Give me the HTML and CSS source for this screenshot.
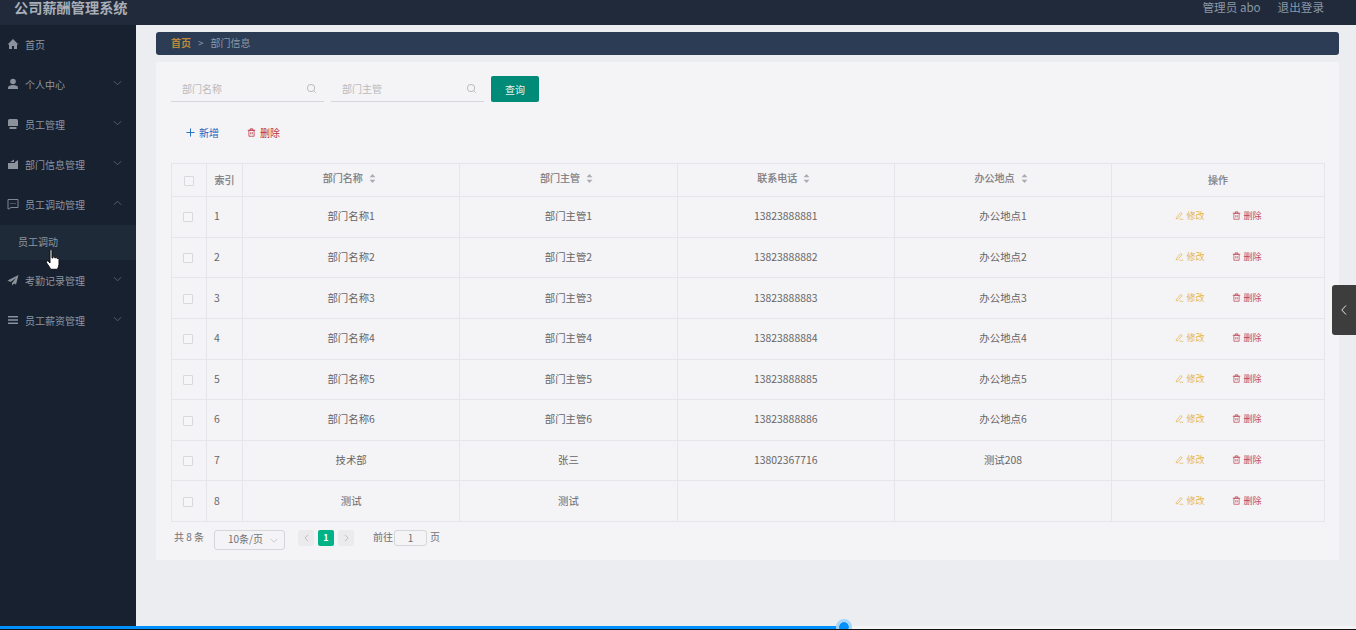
FILE: index.html
```html
<!DOCTYPE html>
<html lang="zh-CN">
<head>
<meta charset="utf-8">
<title>公司薪酬管理系统</title>
<link rel="stylesheet" href="styles.css">
</head>
<body>
<svg class="defs" width="0" height="0" aria-hidden="true">
  <symbol id="i-chev" viewBox="0 0 10 6"><path d="M1 1l4 4 4-4" fill="none" stroke="currentColor" stroke-width="1"/></symbol>
  <symbol id="i-search" viewBox="0 0 12 12"><circle cx="5.5" cy="5.5" r="4" fill="none" stroke="currentColor"/><path d="M8.5 8.5l2 2" stroke="currentColor"/></symbol>
  <symbol id="i-trash" viewBox="0 0 12 12"><path d="M2.5 3h7v8h-7zM1 3h10M4.500 3V1h3v2M5 5.500v3M7 5.500v3" fill="none" stroke="currentColor"/></symbol>
  <symbol id="i-edit" viewBox="0 0 12 12"><path d="M2 8.500L7.500 2l2 1.500L4 10l-2.500.5zM6 11h5" fill="none" stroke="currentColor"/></symbol>
  <symbol id="i-sort" viewBox="0 0 8 11"><path d="M4 0l3.500 4h-7zM4 11L.5 7h7z" fill="currentColor"/></symbol>
</svg>
<header class="topbar">
  <div class="brand">公司薪酬管理系统</div>
  <div class="user"><span>管理员 abo</span><span>退出登录</span></div>
</header>
<div class="shell">
  <aside class="side">
    <div class="nav-item">
      <svg class="nav-icon" viewBox="0 0 12 12"><path d="M6 1L0.500 6.500 2 6.500V11h3V8h2v3h3V6.500h1.500z" fill="currentColor"/></svg>
      <span>首页</span>
    </div>
    <div class="nav-item">
      <svg class="nav-icon" viewBox="0 0 12 12"><circle cx="6" cy="3.500" r="2.800" fill="currentColor"/><path d="M1 11V9.500C1 8 3 7 6 7s5 1 5 2.500V11z" fill="currentColor"/></svg>
      <span>个人中心</span><svg class="chev"><use href="#i-chev"/></svg>
    </div>
    <div class="nav-item">
      <svg class="nav-icon" viewBox="0 0 12 12"><path d="M2.500 1h7a1.500 1.500 0 0 1 1.500 1.500V8H1V2.500A1.500 1.500 0 0 1 2.500 1zM2.500 9h7v2h-7z" fill="currentColor"/></svg>
      <span>员工管理</span><svg class="chev"><use href="#i-chev"/></svg>
    </div>
    <div class="nav-item">
      <svg class="nav-icon" viewBox="0 0 12 12"><path d="M1 5h7v-1l3-2v9H1zM3 4l4-2.500V4z" fill="currentColor"/></svg>
      <span>部门信息管理</span><svg class="chev"><use href="#i-chev"/></svg>
    </div>
    <div class="nav-item">
      <svg class="nav-icon" viewBox="0 0 12 12"><path d="M1 1.500h10v8H4L1.500 11 1 11zM3.500 5.500h1M5.500 5.500h1M7.500 5.500h1" fill="none" stroke="currentColor" stroke-width=".9"/></svg>
      <span>员工调动管理</span><svg class="chev chev-up"><use href="#i-chev"/></svg>
    </div>
    <div class="nav-sub">员工调动</div>
    <div class="nav-item">
      <svg class="nav-icon" viewBox="0 0 12 12"><path d="M11.500 1L.5 6.500l3 1.500 5.500-4-4 5v2.500l2-2 2 1z" fill="currentColor"/></svg>
      <span>考勤记录管理</span><svg class="chev"><use href="#i-chev"/></svg>
    </div>
    <div class="nav-item">
      <svg class="nav-icon" viewBox="0 0 12 12"><path d="M1 2h10v1.500H1zM1 5.300h10v1.500H1zM1 8.500h10V10H1z" fill="currentColor"/></svg>
      <span>员工薪资管理</span><svg class="chev"><use href="#i-chev"/></svg>
    </div>
  </aside>
  <main class="main">
    <nav class="crumb"><b>首页</b><i>&gt;</i><span>部门信息</span></nav>
    <section class="card">
      <form class="search">
        <label class="field"><span>部门名称</span><svg class="search-icon"><use href="#i-search"/></svg></label>
        <label class="field"><span>部门主管</span><svg class="search-icon"><use href="#i-search"/></svg></label>
        <button type="button" class="query">查询</button>
      </form>
      <div class="tools">
        <span class="tool tool-add"><svg viewBox="0 0 10 10"><path d="M5 .5v9M.5 5h9" stroke="currentColor" fill="none"/></svg>新增</span>
        <span class="tool tool-del"><svg><use href="#i-trash"/></svg>删除</span>
      </div>
      <table class="grid">
        <colgroup>
          <col class="c-check"><col class="c-index"><col class="c-data"><col class="c-data"><col class="c-data"><col class="c-data"><col>
        </colgroup>
        <thead>
          <tr>
            <th><span class="check"></span></th>
            <th>索引</th>
            <th class="th-sort">部门名称<svg class="sort"><use href="#i-sort"/></svg></th>
            <th class="th-sort">部门主管<svg class="sort"><use href="#i-sort"/></svg></th>
            <th class="th-sort">联系电话<svg class="sort"><use href="#i-sort"/></svg></th>
            <th class="th-sort">办公地点<svg class="sort"><use href="#i-sort"/></svg></th>
            <th>操作</th>
          </tr>
        </thead>
        <tbody>
          <tr><td><span class="check"></span></td><td class="idx">1</td><td>部门名称1</td><td>部门主管1</td><td>13823888881</td><td>办公地点1</td><td><span class="act act-edit"><svg><use href="#i-edit"/></svg>修改</span><span class="act act-del"><svg><use href="#i-trash"/></svg>删除</span></td></tr>
          <tr><td><span class="check"></span></td><td class="idx">2</td><td>部门名称2</td><td>部门主管2</td><td>13823888882</td><td>办公地点2</td><td><span class="act act-edit"><svg><use href="#i-edit"/></svg>修改</span><span class="act act-del"><svg><use href="#i-trash"/></svg>删除</span></td></tr>
          <tr><td><span class="check"></span></td><td class="idx">3</td><td>部门名称3</td><td>部门主管3</td><td>13823888883</td><td>办公地点3</td><td><span class="act act-edit"><svg><use href="#i-edit"/></svg>修改</span><span class="act act-del"><svg><use href="#i-trash"/></svg>删除</span></td></tr>
          <tr><td><span class="check"></span></td><td class="idx">4</td><td>部门名称4</td><td>部门主管4</td><td>13823888884</td><td>办公地点4</td><td><span class="act act-edit"><svg><use href="#i-edit"/></svg>修改</span><span class="act act-del"><svg><use href="#i-trash"/></svg>删除</span></td></tr>
          <tr><td><span class="check"></span></td><td class="idx">5</td><td>部门名称5</td><td>部门主管5</td><td>13823888885</td><td>办公地点5</td><td><span class="act act-edit"><svg><use href="#i-edit"/></svg>修改</span><span class="act act-del"><svg><use href="#i-trash"/></svg>删除</span></td></tr>
          <tr><td><span class="check"></span></td><td class="idx">6</td><td>部门名称6</td><td>部门主管6</td><td>13823888886</td><td>办公地点6</td><td><span class="act act-edit"><svg><use href="#i-edit"/></svg>修改</span><span class="act act-del"><svg><use href="#i-trash"/></svg>删除</span></td></tr>
          <tr><td><span class="check"></span></td><td class="idx">7</td><td>技术部</td><td>张三</td><td>13802367716</td><td>测试208</td><td><span class="act act-edit"><svg><use href="#i-edit"/></svg>修改</span><span class="act act-del"><svg><use href="#i-trash"/></svg>删除</span></td></tr>
          <tr><td><span class="check"></span></td><td class="idx">8</td><td>测试</td><td>测试</td><td></td><td></td><td><span class="act act-edit"><svg><use href="#i-edit"/></svg>修改</span><span class="act act-del"><svg><use href="#i-trash"/></svg>删除</span></td></tr>
        </tbody>
      </table>
      <div class="pager">
        <span class="total">共 8 条</span>
        <span class="size">10条/页<svg class="size-chev"><use href="#i-chev"/></svg></span>
        <span class="pages">
          <span class="pg"><svg viewBox="0 0 6 10"><path d="M5 1L1 5l4 4" fill="none" stroke="currentColor"/></svg></span>
          <span class="pg pg-on">1</span>
          <span class="pg"><svg viewBox="0 0 6 10"><path d="M1 1l4 4-4 4" fill="none" stroke="currentColor"/></svg></span>
        </span>
        <span class="goto">前往<span class="goto-box">1</span>页</span>
      </div>
    </section>
  </main>
</div>
<div class="drawer-tab"><svg viewBox="0 0 6 10"><path d="M5 .5L.8 5 5 9.500" fill="none" stroke="currentColor"/></svg></div>
<svg class="cursor" viewBox="0 0 16 22"><path d="M5 1.500c0-1 2-1 2 0V9l1 0V8c0-1 1.800-1 1.800 0v1l.7 0c0-1 1.800-1 1.800 0v1c.2-.8 1.700-.7 1.700.3v5c0 2-1 3-1.500 5H5.500c-.5-2-2-3.500-4-6.500-.8-1.300.7-2.500 1.800-1.500L5 14z" fill="#fff" stroke="#111" stroke-width="1"/></svg>
<div class="video-bar"><div class="video-played"></div><div class="video-knob"></div></div>
</body>
</html>
```
FILE: styles.css
```css
* { box-sizing: border-box; }
html, body { margin: 0; height: 100%; overflow: hidden; }
body {
  width: 1356px;
  height: 630px;
  background: #ebedf1;
  font-family: "Noto Sans CJK SC", "Open Sans", sans-serif;
  font-size: 10px;
  color: #666;
  display: flex;
  flex-direction: column;
}
.defs { position: absolute; }

.topbar {
  height: 25px;
  flex: none;
  background: #202a3a;
  display: flex;
  justify-content: space-between;
  padding: 0 32px 0 14px;
  line-height: 15px;
  color: #8a97a6;
}
.brand { font-size: 14.2px; font-weight: 700; color: #a8afb8; }
.user { display: flex; gap: 17px; font-size: 11.600px; }

.shell { flex: 1; display: flex; min-height: 0; }
.side { width: 136px; flex: none; background: #172130; color: #8d96a2; }
.nav-item { height: 40px; display: flex; align-items: center; padding: 0 14px 2px 7px; }
.nav-icon { width: 12px; height: 12px; margin-right: 6px; color: #8b929c; flex: none; }
.chev { width: 9px; height: 6px; margin-left: auto; position: relative; top: -1px; color: #5d6774; }
.chev-up { transform: rotate(180deg); }
.nav-sub { height: 35px; margin-bottom: 1px; background: #1f2a39; padding-left: 18px; line-height: 33px; }

.main { flex: 1; padding: 7px 17px 0 20px; min-width: 0; }
.crumb {
  height: 23px;
  background: #2c3c54;
  border-radius: 3px;
  display: flex;
  align-items: center;
  padding: 0 0 2px 15px;
  color: #8e99a8;
}
.crumb b { color: #b98a3e; font-weight: 700; }
.crumb i { font-style: normal; margin: 0 7px; }

.card { margin-top: 7px; height: 498px; background: #f4f3f6; padding: 14px 14px 0 15px; }
.search { display: flex; align-items: flex-end; gap: 7px; height: 26px; }
.field {
  width: 153px;
  height: 26px;
  border-bottom: 1px solid #d5d6da;
  display: flex;
  align-items: center;
  justify-content: space-between;
  padding: 0 7px 0 11px;
  color: #b9babd;
}
.search-icon { width: 11px; height: 11px; color: #b5b6b9; }
.query {
  width: 48px;
  height: 26px;
  border: 0;
  border-radius: 2px;
  background: #008a78;
  color: #e6f4f1;
  font: inherit;
  padding: 0;
}
.tools { display: flex; gap: 28px; height: 61px; padding: 23px 0 0 15px; line-height: 15px; }
.tool { display: flex; align-items: center; gap: 4px; height: 15px; }
.tool svg { width: 9px; height: 9px; }
.tool-add { color: #1565c0; }
.tool-del { color: #b8323f; }

.grid {
  width: 1154px;
  height: 358px;
  table-layout: fixed;
  border-collapse: collapse;
  background: #f4f3f6;
}
.c-check { width: 35px; }
.c-index { width: 36px; }
.c-data { width: 217.300px; }
.grid th, .grid td {
  border: 1px solid #e5e5ea;
  padding: 0 0 2px;
  text-align: center;
  font-weight: 400;
  color: #666;
}
.grid th { height: 33px; color: #7a7a7d; -webkit-text-stroke: .2px #7a7a7d; }
.grid .th-sort { padding: 0 4px 5px 0; }
.grid td { height: 40.625px; font-size: 10.400px; }
.grid .idx { text-align: left; padding-left: 7px; }
.check {
  display: inline-block;
  width: 10px;
  height: 10px;
  border: 1px solid #d9d9dd;
  border-radius: 1px;
  background: #f6f6f8;
  vertical-align: middle;
  position: relative;
  left: -1px;
}
th .check { left: 0; }
.sort { width: 7px; height: 9px; margin-left: 6px; color: #a9abb0; vertical-align: -1px; }
.act { display: inline-flex; align-items: center; gap: 3px; font-size: 9px; }
.act svg { width: 9px; height: 9px; }
.act-edit { color: #e5b654; margin-right: 27px; }
.act-del { color: #bf4b57; }

.pager { display: flex; align-items: flex-start; margin-top: 8px; height: 20px; color: #717174; }
.total { margin-left: 3px; width: 40px; line-height: 14px; }
.size {
  width: 71px;
  height: 20px;
  border: 1px solid #d5d6da;
  border-radius: 3px;
  display: flex;
  align-items: center;
  justify-content: space-between;
  padding: 0 6px 3px 13px;
}
.size-chev { width: 8px; height: 5px; color: #c2c3c7; position: relative; top: 2px; }
.pages { display: flex; gap: 4px; margin: 0 19px 0 13px; }
.pg {
  width: 16px;
  height: 16px;
  border-radius: 2px;
  background: #ebebee;
  display: flex;
  align-items: center;
  justify-content: center;
  color: #b4b5b9;
}
.pg svg { width: 5px; height: 8px; }
.pg-on { background: #00b387; color: #fff; font-weight: 700; font-size: 9px; padding-bottom: 1px; }
.goto { display: flex; align-items: flex-start; height: 16px; line-height: 14px; }
.goto-box {
  width: 33px;
  height: 16px;
  margin: 0 3px 0 1px;
  border: 1px solid #d5d6da;
  border-radius: 3px;
  text-align: center;
  line-height: 13px;
}

.drawer-tab {
  position: absolute;
  left: 1332px;
  top: 285px;
  width: 24px;
  height: 50px;
  background: #3d3d3d;
  border-radius: 3px 0 0 3px;
  color: #e4e4e4;
  display: flex;
  align-items: center;
  justify-content: center;
}
.drawer-tab svg { width: 6px; height: 10px; }
.cursor { position: absolute; left: 45px; top: 249px; width: 16px; height: 22px; }

.video-bar { position: absolute; left: 0; bottom: 0; width: 100%; height: 4px; background: #f4f4f4; border-bottom: 1px solid #111; }
.video-played { width: 844px; height: 3px; background: #0090ff; }
.video-knob {
  position: absolute;
  left: 836px;
  top: -7px;
  width: 16px;
  height: 16px;
  border-radius: 50%;
  background: #0090ff;
  border: 3px solid #a6d6fb;
  background-clip: padding-box;
  clip-path: inset(0 0 6px 0);
}
```
